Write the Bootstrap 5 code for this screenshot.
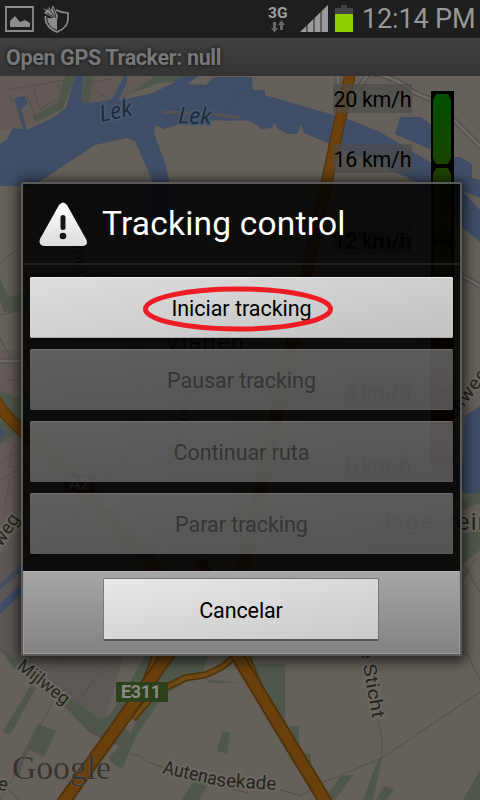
<!DOCTYPE html>
<html lang="es">
<head>
<meta charset="utf-8">
<meta name="viewport" content="width=device-width, initial-scale=1">
<title>Open GPS Tracker</title>
<link href="https://cdn.jsdelivr.net/npm/bootstrap@5.3.0/dist/css/bootstrap.min.css" rel="stylesheet">
<style>
body{background:#656059;font-family:Roboto,"Liberation Sans",sans-serif}
.screen{width:480px;height:800px}
.statusbar{height:38px;background:#1e1e1e;color:#999;flex:none}
.clock{font-size:27px;line-height:39px;letter-spacing:-.15px;color:#979797;margin-left:4px;width:118px}
.titlebar{height:38px;flex:none;background:linear-gradient(#404040,#343434);color:#777;font-size:21.5px;font-weight:700;line-height:40px;padding-left:6px;text-shadow:0 0 4px #111}
.titlebar span{display:inline-block;letter-spacing:-.36px}
.mapview{flex:1;min-height:0}
.mapview svg{font-family:Roboto,sans-serif}
.dialog-layer{padding:182px 18px 0 21px;inset:0}
.dlg{height:474px;border:2px solid #5a5a5a;border-radius:3px;background:rgba(0,0,0,.88);box-shadow:0 2px 12px 4px rgba(0,0,0,.6)}
.dlg-head{height:81px;padding-left:15px;border-bottom:2px solid #1f1f1f;margin:0 1px;color:#fff;font-size:33.5px;flex:none}
.dlg-title{margin-left:14px;letter-spacing:.2px;padding-top:1px;white-space:nowrap}
.dlg-body{padding:12px 7px 0 7px;gap:11px;height:306px;flex:none}
.choice{height:61px;flex:none;border:0;border-radius:2px;padding:4px 0 0;font-size:21.5px;color:#000;background:linear-gradient(170deg,#dedede,#c2c2c2);box-shadow:inset 0 1px #f0f0f0,inset 0 -1px #aaa;letter-spacing:-.03px}
.choice:disabled{opacity:1;border:0;color:#343434;background:linear-gradient(175deg,rgba(150,150,150,.6),rgba(130,130,130,.6));box-shadow:inset 0 1px #6c6c6c,inset 0 -1px #5a5a5a}
.ring{left:113px;top:9px}
.dlg-foot{flex:1;background:linear-gradient(#a6a6a6,#828282);border:1px solid #9a9a9a;border-top-color:#b4b4b4;padding:6px 1px 0 0}
.cancel{width:276px;height:63px;border:1px solid #777;border-bottom:2px solid #555;border-radius:2px;background:linear-gradient(170deg,#e8e8e8,#c9c9c9);font-size:21.5px;color:#000;padding:5px 0 0;letter-spacing:-.1px}
</style>
<script src="https://cdn.jsdelivr.net/npm/bootstrap@5.3.0/dist/js/bootstrap.bundle.min.js"></script>
</head>
<body class="m-0 overflow-hidden">
<div class="screen position-relative d-flex flex-column overflow-hidden">
  <header class="statusbar d-flex">
    <svg width="80" height="38" viewBox="0 0 80 38" aria-hidden="true">
      <path d="M6 7h27v24H6z" fill="none" stroke="#8c8c8c" stroke-width="1.8"/>
      <path d="M10 27v-6l5-5 5 6 5-2 5 3v4z" fill="#8c8c8c"/>
      <path d="M56 10q6 3 12 3v7q-1 8-11 12-10-4-11.500-12v-4" fill="none" stroke="#8c8c8c" stroke-width="1.700"/>
      <path d="M47 18h10v12q-9-3-10-12zM42 8l5 2 2-3 2 3 2-5 3 7 2 4-1 4-7-4-6-3 2-2z" fill="#8c8c8c"/>
      <path d="M48 8l8 10M53 8l3 9M47 13l7 4" stroke="#1e1e1e" stroke-width=".8"/>
    </svg>
    <svg class="ms-auto" width="92" height="38" viewBox="266 0 92 38" font-family="Roboto,sans-serif" aria-hidden="true">
      <text x="268" y="18" font-size="15.500" font-weight="700" fill="#a0a0a0" textLength="19.500" lengthAdjust="spacingAndGlyphs">3G</text>
      <path d="M273 22h3v6h2l-3.500 4.500L271 28h2zM280 30v-5h-2l3.500-5 3.500 5h-2v5z" fill="#656565"/>
      <path d="M300 32l28-27v27z" fill="#999"/><path d="M307 24v8M314 18v14M321 11v21" stroke="#222" stroke-width="1"/>
      <path d="M335 8h6V5h6v3h6v6h-18z" fill="#444"/><path d="M335 14h18v18h-18z" fill="#90cf00"/>
    </svg>
    <div class="clock text-nowrap">12:14 PM</div>
  </header>
  <div class="titlebar"><span>Open GPS Tracker: null</span></div>
  <main class="mapview">
    <svg class="d-block" width="480" height="724" viewBox="0 76 480 724">
      <defs>
        <linearGradient id="speed" x1="0" y1="0" x2="0" y2="1"><stop offset="0" stop-color="#005000"/><stop offset=".25" stop-color="#234000"/><stop offset=".6" stop-color="#3c2400"/><stop offset="1" stop-color="#580000"/></linearGradient>
      </defs>
      <path d="M0 76h480v724H0z" fill="#656059"/>
      <path d="M0 76h70l-12 33-28 17L0 130zM84 76h90l-60 26-30 2zM0 350h25v190L0 600z" fill="#625a56"/>
      <path d="M0 540h160L104 720 0 652z" fill="#5d5855"/>
      <g fill="#4f574b">
        <path d="M66 76h9L63 109l-27 13-4-6 26-13 5-20zM84 76h9l-3 26-8 2zM155 76h31l-8 13-16-1 18-7-20 2-30 10z"/>
        <path d="M0 278l8 19 17-3v16l-21 2-4-12zM0 391l25 9v27L0 445z"/>
        <path d="M0 648l95 67q10 8 18-4l32-55h12l-38 67 10 8-2 19-22-10-15-7-24-25-53-40zM3 731l28-46 5 3-26 47zM38 724l18 7-12 26-16-8-9 28-6-4z"/>
        <path d="M168 656h40l-5 16-40 24-28 42-12 30q-8 0-14-10l22-26zM210 683h30l-35-4zM254 664h31v62h14v26l12 2v19l-16-8-26-42zM222 731l8 1-3 22-10-3zM182 800l14-23 13 5-10 18zM335 800l18-25-12 1-15 20zM363 800l15-41 4-1-9 42zM384 786l10 3-8 11h-10zM463 800l17-30v30z"/>
        <path d="M461 500l19-9v12l-19 7zM461 535l19-5v20l-19 15z"/>
      </g>
      <g fill="none" stroke="#554f4a" stroke-width="1">
        <path d="M8 90l62-11M10 96l4 11M27 95l9 23M34 89l5 20 18-9M57 84l5 11M92 83l20-5M95 90l17 11M0 263l25-20M0 315l25-6M0 338l12 23M8 380h15M0 435l25 20M0 462l12-8-4 12 16 4M0 480l25-14M5 505l5-27"/>
        <path d="M65 657L40 673M110 657L78 702M53 701L30 748 0 800M90 730l40 20M0 783l20 17M130 754l10 2 8 6 70 24 30 7M280 790l22 6M300 796l24-14 58-24L480 692M382 758V740l-4-20M461 560l19 32M461 582l15-24M465 650l15 30"/>
      </g>
      <g fill="#3f4d66">
        <path d="M0 144l7-5 6-11 10 1-9-31 11-2 3 7-7 6 6 21 25-12 14-10 9-32h8l-1 27 18-1 12-3 10-19 2-5h3v7l-9 19 35-8 24-12h-4l20-9h10l-15 12 18 1 8-8h38l1 13h12v30l-10 1-16 -1-50 1-25 8-9-4-1 8 11 30 4 17v40h-17v-40l-17-39-8-3-32 7-62 41H0z"/>
        <path d="M236 91l18 1 94 27 32 13 60 36 20 16v31h-6q-29-32-60-43l-85-37-5-2-3-8-4 9-9 0-10-5-4-7-2 6-10 1-14-9-22 1zM400 117h21l24 18v21l-50-22zM450 157h10l12 7v14l8 2v28l-30-24z"/>
        <path d="M461 183l19 6v53l-19-16zM465 416l15-10v86q-10 4-19 0zM0 427l5 5-5 10z"/>
        <path d="M0 604l25-24v11L0 614z"/>
        <path d="M134 340h4v80q-10 55-70 110L0 590v-6l56-54q80-80 78-110z" opacity=".7"/>
      </g>
      <path d="M163 112l50 2 27 4" stroke="#555451" stroke-width="3" fill="none"/>
      <path d="M461 190l19 20v-12z" fill="#656059"/>
      <g fill="none" stroke="#4d4a48" stroke-width="5"><path d="M338 76v8l14 13 17-24q26 3 46 20l20 8 50 50M461 275l19 11M0 361h25"/></g>
      <g fill="none" stroke="#6d6966" stroke-width="3"><path d="M338 76v8l14 13 17-24q26 3 46 20l20 8 50 50M461 275l19 11M0 361h25"/></g>
      <g fill="none" stroke-linejoin="round">
        <path d="M350 74L245 560 205 640M-6 398q15 25 46 47l150 160M200 560L243 650" stroke="#58370b" stroke-width="12"/>
        <path d="M350 74L245 560 205 640M-6 398q15 25 46 47l150 160" stroke="#6c410d" stroke-width="9"/>
        <path d="M155 654q-3 15-17 41M246 652q10 32 27 59M234 656q-8 11-29 19l-20 3-30 15-22 26" stroke="#4e3307" stroke-width="7"/>
        <path d="M155 654q-3 15-17 41M246 652q10 32 27 59M234 656q-8 11-29 19l-20 3-30 15-22 26" stroke="#6d4a15" stroke-width="4"/>
        <path d="M175 645L118 726 60 807M226 637l36 60 68 112" stroke="#50330a" stroke-width="14"/>
        <path d="M175 645L118 726 60 807M226 637l36 60 68 112" stroke="#6a400d" stroke-width="10"/>
      </g>
      <g stroke="#6b6862" stroke-width="4" stroke-linejoin="round" paint-order="stroke" fill="#24241c">
        <g stroke="#48566d" fill="#1b2937" font-family="'Open Sans','Noto Sans',sans-serif" font-style="italic" font-size="23">
          <text transform="translate(101 122) rotate(-12)" textLength="33" lengthAdjust="spacingAndGlyphs">Lek</text>
          <text transform="translate(178 123) rotate(2)" textLength="33" lengthAdjust="spacingAndGlyphs">Lek</text>
        </g>
        <text transform="translate(16 668) rotate(38)" font-size="18" textLength="61" lengthAdjust="spacingAndGlyphs">Mijlweg</text>
        <text transform="translate(162 773) rotate(13)" font-size="19" textLength="55" lengthAdjust="spacingAndGlyphs">Autena</text>
        <text transform="translate(216 786) rotate(4)" font-size="19" textLength="60" lengthAdjust="spacingAndGlyphs">sekade</text>
        <text transform="translate(358 637) rotate(80)" font-size="18" textLength="83" lengthAdjust="spacingAndGlyphs">de Sticht</text>
        <text transform="translate(-15 573) rotate(-57)" font-size="19" textLength="65">nseweg</text>
        <text transform="translate(441 438) rotate(-53)" font-size="19" textLength="80">evenweg</text>
        <text x="373" y="530" font-size="24" textLength="118">Hagestein</text>
        <text x="165" y="350" font-size="24" textLength="79">Vianen</text>
        <text transform="translate(172 464) rotate(-72)" font-size="18">Stuartweg</text>
        <text transform="translate(70 240) rotate(78)" font-size="18">Vorst</text>
        <text x="-14" y="790" transform="rotate(12 0 790)" font-size="19">de</text>
      </g>
      <path d="M116 682h52v20h-52z" fill="#2c4019"/>
      <text x="121" y="698" font-size="18" font-weight="700" fill="#8b8b85" textLength="40">E311</text>
      <path d="M64 474h31v18H64z" fill="#502018"/>
      <text x="69" y="489" font-size="17" font-weight="700" fill="#999">A2</text>
      <text x="12" y="779" font-family="'Liberation Serif',serif" font-size="34" fill="#37342f" stroke="#75706a" stroke-width=".6" paint-order="stroke" textLength="99" lengthAdjust="spacingAndGlyphs">Google</text>
      <path d="M431 91h23v374h-23z" fill="#000"/>
      <path d="M436 94h12l3 6v58l-3 6h-12l-3-6v-58zM436 168h12l3 6v60l-3 6h-12l-3-6v-60zM436 243h12l3 6v60l-3 6h-12l-3-6v-60zM436 318h12l3 6v60l-3 6h-12l-3-6v-60zM436 393h12l3 6v60l-3 6h-12l-3-6v-60z" fill="url(#speed)"/>
      <g fill="#4b4b49" opacity=".65"><path d="M333 84h79v29h-79zM333 144h79v29h-79zM333 225h79v29h-79zM345 376h67v29h-67zM345 451h67v29h-67z"/></g>
      <g font-size="21.500" fill="#000">
        <text x="333.500" y="107" textLength="78">20 km/h</text><text x="333.500" y="167" textLength="78">16 km/h</text><text x="333.500" y="249" textLength="78">12 km/h</text><text x="345" y="399" textLength="66">4 km/h</text><text x="345" y="474" textLength="66">0 km/h</text>
      </g>
    </svg>
  </main>
  <div class="dialog-layer position-absolute">
    <section class="dlg d-flex flex-column" role="dialog" aria-label="Tracking control">
      <div class="dlg-head d-flex align-items-center">
        <svg width="49" height="44" viewBox="0 0 49 44" aria-hidden="true">
          <defs><linearGradient id="warn" x1="0" y1="0" x2="0" y2="1"><stop stop-color="#fff"/><stop offset="1" stop-color="#dcdcdc"/></linearGradient></defs>
          <path d="M20 3q4-5 8 0l19 34q3 6-3 7H5q-6-1-4-7z" fill="url(#warn)"/>
          <rect x="21.500" y="13" width="5" height="15" rx="2.500" fill="#151515"/><circle cx="24" cy="34" r="3.300" fill="#151515"/>
        </svg>
        <span class="dlg-title">Tracking control</span>
      </div>
      <div class="dlg-body d-flex flex-column">
        <button class="btn choice position-relative" type="button"><span>Iniciar tracking</span>
          <svg class="ring position-absolute" width="190" height="46" viewBox="0 0 190 46" aria-hidden="true"><ellipse cx="95" cy="23" rx="92.500" ry="20" fill="none" stroke="#ee1c25" stroke-width="5"/></svg>
        </button>
        <button class="btn choice" type="button" disabled>Pausar tracking</button>
        <button class="btn choice" type="button" disabled>Continuar ruta</button>
        <button class="btn choice" type="button" disabled>Parar tracking</button>
      </div>
      <div class="dlg-foot d-flex justify-content-center align-items-start"><button class="btn cancel" type="button">Cancelar</button></div>
    </section>
  </div>
</div>
</body>
</html>
